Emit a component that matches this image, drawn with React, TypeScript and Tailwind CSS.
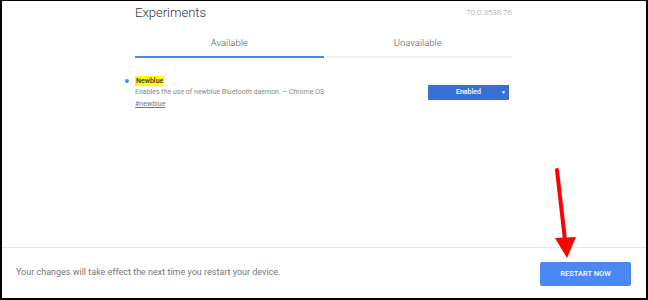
export default function App() {
  return (
    <div
      className="flex h-[300px] w-[648px] flex-col overflow-hidden border-x-2 border-t border-b-2 border-black bg-white"
      style={{ fontFamily: "Roboto, 'Liberation Sans', sans-serif" }}
    >
      <div className="relative flex-1">
        <div className="ml-[133px] w-[377px]">
          <div className="flex h-[21px] items-center justify-between pt-[3px]">
            <h1 className="text-[13px] leading-[18px] font-light text-[#333]">Experiments</h1>
            <span className="text-[8px] font-light text-[#999]">70.0.3538.76</span>
          </div>
          <div className="mt-[15px] flex text-[9.5px] leading-[12px] font-light text-[#555]">
            <div className="flex-1 border-b-2 border-[#4a86f0] pb-[7px] text-center">Available</div>
            <div className="flex-1 border-b-2 border-[#f2f2f2] pb-[7px] text-center">Unavailable</div>
          </div>
          <div className="relative mt-[18px] flex items-start justify-between">
            <span className="absolute top-[3px] -left-[10px] h-[4px] w-[4px] rounded-full bg-[#4a86f0]" />
            <div className="flex flex-col">
              <span className="self-start bg-[#ffff00] px-[1px] text-[7px] leading-[10px] font-medium text-[#333]">
                Newblue
              </span>
              <span className="mt-[1px] text-[7px] leading-[10px] text-[#888]">
                Enables the use of newblue Bluetooth daemon. – Chrome OS
              </span>
              <span className="mt-[2px] text-[7px] leading-[10px] text-[#777] underline">#newblue</span>
            </div>
            <div className="relative mt-[9px] mr-[3px] flex h-[15px] w-[81px] items-center justify-center bg-[#3b6fd8] text-[7px] font-medium text-white">
              Enabled
              <span className="absolute right-[3px] text-[5px]">▼</span>
            </div>
          </div>
        </div>
        <svg className="absolute top-[167px] left-[548px]" width="32" height="92" viewBox="0 0 32 92">
          <line x1="7" y1="2" x2="15" y2="72" stroke="#ff0000" strokeWidth="4" strokeLinecap="round" />
          <polygon points="5,70 26,69 17,90" fill="#ff0000" />
        </svg>
      </div>
      <div className="flex h-[51px] items-center justify-between border-t border-[#e6e6e6] pr-[15px] pl-[14px]">
        <span className="text-[9px] text-[#777]">Your changes will take effect the next time you restart your device.</span>
        <button
          type="button"
          className="mt-[1px] h-[24px] w-[91px] rounded-[2px] bg-[#4a89f3] text-[7.5px] font-medium text-white"
        >
          RESTART NOW
        </button>
      </div>
    </div>
  );
}
